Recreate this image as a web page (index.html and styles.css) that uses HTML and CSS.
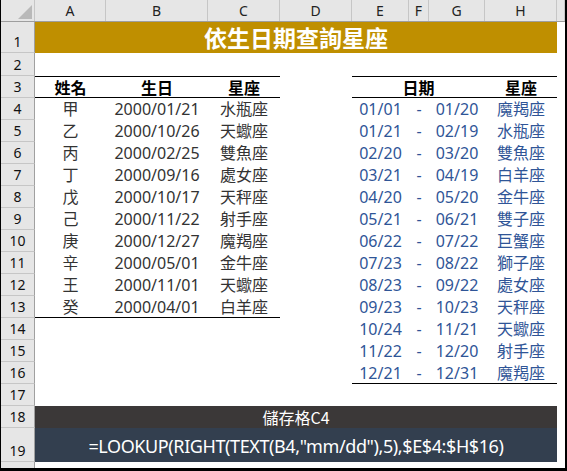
FILE: index.html
```html
<!DOCTYPE html>
<html lang="zh-Hant">
<head>
<meta charset="utf-8">
<title>依生日期查詢星座</title>
<link rel="stylesheet" href="styles.css">
</head>
<body>
<div class="sheet">
  <div class="row hdr">
    <div class="corner"><svg width="34" height="22" viewBox="0 0 34 22"><polygon points="31,5 31,19 17,19" fill="#b9b9b9"/></svg></div>
    <div class="ch">A</div><div class="ch">B</div><div class="ch">C</div><div class="ch">D</div><div class="ch">E</div><div class="ch">F</div><div class="ch">G</div><div class="ch">H</div><div class="ch"></div>
  </div>
  <div class="row r1">
    <div class="rh">1</div>
    <div class="title">依生日期查詢星座</div>
    <div></div>
  </div>
  <div class="row r2"><div class="rh">2</div></div>
  <div class="row">
    <div class="rh">3</div>
    <div class="c th">姓名</div><div class="c th">生日</div><div class="c th">星座</div><div class="c"></div>
    <div class="c th span3">日期</div><div class="c th">星座</div>
  </div>

  <div class="row"><div class="rh">4</div><div class="c">甲</div><div class="c">2000/01/21</div><div class="c">水瓶座</div><div class="c"></div><div class="c b">01/01</div><div class="c b">-</div><div class="c b">01/20</div><div class="c b">魔羯座</div></div>
  <div class="row"><div class="rh">5</div><div class="c">乙</div><div class="c">2000/10/26</div><div class="c">天蠍座</div><div class="c"></div><div class="c b">01/21</div><div class="c b">-</div><div class="c b">02/19</div><div class="c b">水瓶座</div></div>
  <div class="row"><div class="rh">6</div><div class="c">丙</div><div class="c">2000/02/25</div><div class="c">雙魚座</div><div class="c"></div><div class="c b">02/20</div><div class="c b">-</div><div class="c b">03/20</div><div class="c b">雙魚座</div></div>
  <div class="row"><div class="rh">7</div><div class="c">丁</div><div class="c">2000/09/16</div><div class="c">處女座</div><div class="c"></div><div class="c b">03/21</div><div class="c b">-</div><div class="c b">04/19</div><div class="c b">白羊座</div></div>
  <div class="row"><div class="rh">8</div><div class="c">戊</div><div class="c">2000/10/17</div><div class="c">天秤座</div><div class="c"></div><div class="c b">04/20</div><div class="c b">-</div><div class="c b">05/20</div><div class="c b">金牛座</div></div>
  <div class="row"><div class="rh">9</div><div class="c">己</div><div class="c">2000/11/22</div><div class="c">射手座</div><div class="c"></div><div class="c b">05/21</div><div class="c b">-</div><div class="c b">06/21</div><div class="c b">雙子座</div></div>
  <div class="row"><div class="rh">10</div><div class="c">庚</div><div class="c">2000/12/27</div><div class="c">魔羯座</div><div class="c"></div><div class="c b">06/22</div><div class="c b">-</div><div class="c b">07/22</div><div class="c b">巨蟹座</div></div>
  <div class="row"><div class="rh">11</div><div class="c">辛</div><div class="c">2000/05/01</div><div class="c">金牛座</div><div class="c"></div><div class="c b">07/23</div><div class="c b">-</div><div class="c b">08/22</div><div class="c b">獅子座</div></div>
  <div class="row"><div class="rh">12</div><div class="c">王</div><div class="c">2000/11/01</div><div class="c">天蠍座</div><div class="c"></div><div class="c b">08/23</div><div class="c b">-</div><div class="c b">09/22</div><div class="c b">處女座</div></div>
  <div class="row"><div class="rh">13</div><div class="c end">癸</div><div class="c end">2000/04/01</div><div class="c end">白羊座</div><div class="c"></div><div class="c b">09/23</div><div class="c b">-</div><div class="c b">10/23</div><div class="c b">天秤座</div></div>
  <div class="row"><div class="rh">14</div><div class="c"></div><div class="c"></div><div class="c"></div><div class="c"></div><div class="c b">10/24</div><div class="c b">-</div><div class="c b">11/21</div><div class="c b">天蠍座</div></div>
  <div class="row"><div class="rh">15</div><div class="c"></div><div class="c"></div><div class="c"></div><div class="c"></div><div class="c b">11/22</div><div class="c b">-</div><div class="c b">12/20</div><div class="c b">射手座</div></div>
  <div class="row"><div class="rh">16</div><div class="c"></div><div class="c"></div><div class="c"></div><div class="c"></div><div class="c b end">12/21</div><div class="c b end">-</div><div class="c b end">12/31</div><div class="c b end">魔羯座</div></div>
  <div class="row"><div class="rh">17</div></div>
  <div class="row"><div class="rh">18</div><div class="label">儲存格C4</div></div>
  <div class="row r19"><div class="rh">19</div><div class="formula">=LOOKUP(RIGHT(TEXT(B4,"mm/dd"),5),$E$4:$H$16)</div></div>
  <div class="row r20"><div class="rh"></div></div>
</div>
</body>
</html>
```
FILE: styles.css
```css
* { box-sizing: border-box; }
html, body { margin: 0; padding: 0; background: #fff; }
.sheet {
  width: 567px;
  height: 471px;
  overflow: hidden;
  border-left: 1px solid #000;
  border-right: 2px solid #000;
  border-bottom: 3px solid #000;
  font-family: "Noto Sans", "Noto Sans CJK TC", sans-serif;
}
.row {
  display: grid;
  grid-template-columns: 34px 71px 102px 72px 72px 57px 20px 56px 72px 1fr;
  height: 22px;
}
.hdr { background: #e6e6e6; border-bottom: 1px solid #9e9e9e; }
.corner { border-right: 1px solid #c6c6c6; height: 21px; }
.corner svg { display: block; }
.ch {
  display: flex; align-items: center; justify-content: center;
  font-size: 14px; color: #222; border-right: 1px solid #c6c6c6;
  height: 21px;
}
.rh {
  grid-column: 1;
  background: #e6e6e6;
  border-right: 1px solid #a0a0a0;
  border-bottom: 1px solid #c6c6c6;
  display: flex; align-items: flex-end; justify-content: center;
  font-size: 14px; color: #111; line-height: 1; padding-bottom: 3px;
}
.r1 { height: 31px; }
.r2 { height: 23px; }
.r19 { height: 34px; }
.r20 { height: 6px; }
.r20 .rh { border-bottom: 0; }
.title {
  grid-column: 2 / 10;
  background: #bf8f00;
  color: #fff;
  font-family: "Noto Sans CJK TC", sans-serif;
  font-weight: 700;
  font-size: 23px;
  display: flex; align-items: center; justify-content: center;
  line-height: 1;
}
.c {
  display: flex; align-items: center; justify-content: center;
  font-size: 16px; color: #333; line-height: 1; white-space: nowrap;
}
.th {
  font-family: "Noto Sans CJK TC", sans-serif;
  font-weight: 700; color: #000;
  border-top: 1px solid #000;
  border-bottom: 1px solid #000;
}
.span3 { grid-column: 6 / 9; }
.b { color: #2f5597; }
.end { border-bottom: 1px solid #000; }
.label {
  grid-column: 2 / 10;
  background: #3b3838; color: #fff;
  font-family: "Noto Sans CJK TC", sans-serif;
  font-size: 16px;
  display: flex; align-items: center; justify-content: center;
  line-height: 1;
}
.formula {
  grid-column: 2 / 10;
  background: #333f4f; color: #fff;
  font-size: 18px; letter-spacing: -0.4px;
  display: flex; align-items: center; justify-content: center;
  line-height: 1; padding-top: 2px;
}
```
